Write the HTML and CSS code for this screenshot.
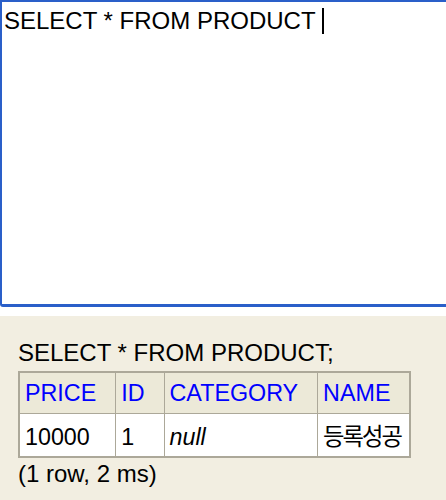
FILE: index.html
```html
<!DOCTYPE html>
<html>
<head>
<meta charset="utf-8">
<link rel="stylesheet" href="styles.css">
</head>
<body>
<div class="editor"><span class="sql">SELECT * FROM PRODUCT</span><span class="caret"></span></div>
<div class="results">
  <div class="query">SELECT * FROM PRODUCT;</div>
  <table class="result-set">
    <tr>
      <th>PRICE</th><th>ID</th><th>CATEGORY</th><th>NAME</th>
    </tr>
    <tr>
      <td>10000</td><td>1</td><td><i>null</i></td><td><span class="ko">등록성공</span></td>
    </tr>
  </table>
  <div class="footer">(1 row, 2 ms)</div>
</div>
</body>
</html>
```
FILE: styles.css
```css
html, body {
  margin: 0;
  padding: 0;
  background: #ffffff;
  overflow: hidden;
  font-family: "Liberation Sans", Arial, "Noto Sans CJK KR", sans-serif;
  color: #000;
}
.editor {
  box-sizing: border-box;
  height: 307px;
  width: 100%;
  border: 2px solid #2a5fc9;
  border-right: none;
  border-bottom-width: 3px;
  border-bottom-left-radius: 3px;
  padding: 5px 2px 0 2px;
  font-size: 24px;
  line-height: 28px;
  display: flex;
  align-items: flex-start;
}
.caret {
  display: inline-block;
  width: 2px;
  height: 26px;
  background: #000;
  margin-left: 6px;
  margin-top: 1px;
}
.results {
  margin-top: 9px;
  background: #f2eee1;
  height: 184px;
  padding: 23px 0 0 18px;
  box-sizing: border-box;
}
.query {
  font-size: 24px;
  line-height: 28px;
  margin-bottom: 4px;
}
.result-set {
  border-collapse: collapse;
  border: 2px solid #aca899;
  font-size: 23.3px;
}
.result-set th {
  background: #ece9d8;
  color: #0000ff;
  font-weight: normal;
  text-align: left;
  border: 1px solid #aca899;
  padding: 6px 19px 6px 5px;
  line-height: 28px;
}
.result-set td {
  background: #ffffff;
  border: 1px solid #aca899;
  padding: 9px 4px 5px 5px;
  line-height: 28px;
}
.ko {
  letter-spacing: -2px;
}
.footer {
  font-size: 24px;
  line-height: 24px;
  margin-top: 4px;
}
```
